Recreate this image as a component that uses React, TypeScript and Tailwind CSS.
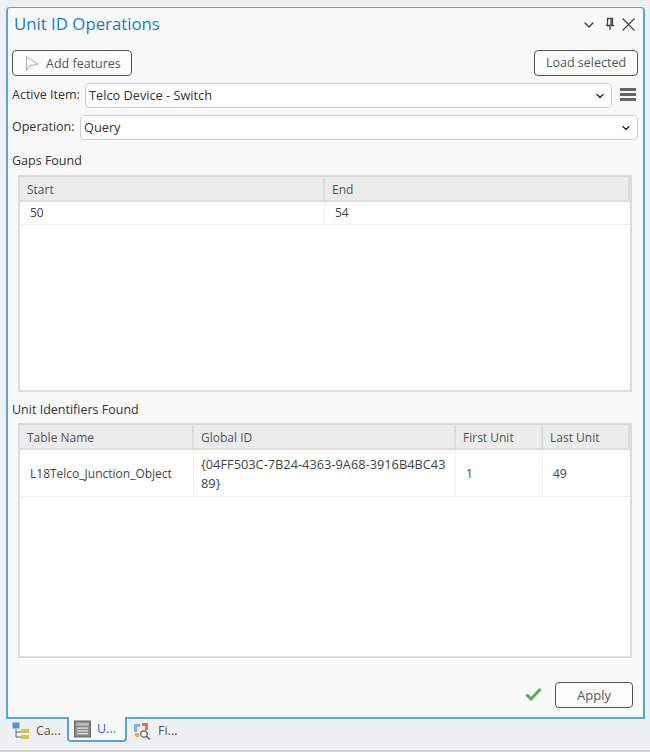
import { ChevronDown, X } from 'lucide-react'

const FONT = "font-['Open_Sans','Noto_Sans',sans-serif]"

function Select({ value }: { value: string }) {
  return (
    <div className="flex-1 h-[25px] flex items-center justify-between pl-[3px] pr-[5px] bg-white border border-[#d0d0d0] rounded-[4px] text-[12.75px] text-[#333]">
      <span className="pt-[1px]">{value}</span>
      <ChevronDown size={12} strokeWidth={2.5} className="text-[#222]" />
    </div>
  )
}

function Button({ className, children }: { className: string; children: React.ReactNode }) {
  return (
    <div className={`h-[26px] flex items-center bg-white/60 border-[1.5px] border-[#555] rounded-[4px] text-[12.5px] text-[#555] ${className}`}>
      {children}
    </div>
  )
}

function TableHead({ cols }: { cols: { label: string; w: string }[] }) {
  return (
    <div className="h-[25px] flex bg-[#ececec] border-b-2 border-[#dcdcdc] text-[12px] text-[#555]">
      {cols.map(c => (
        <div key={c.label} className={`${c.w} pl-[7px] pt-[3px] flex items-center border-r-2 border-[#dcdcdc]`}>{c.label}</div>
      ))}
    </div>
  )
}

export default function App() {
  return (
    <div className={`w-[650px] h-[752px] flex flex-col bg-[#eff0f2] ${FONT} overflow-hidden`}>
      <div className="h-[7px]" />
      <div className="mx-[6px] w-[639px] h-[712px] shrink-0 flex flex-col bg-[#f9f9f9] border border-[#5aa5d8] border-b-2 border-l-2 border-r-2 rounded-t-[4px] px-[4px]">
        {/* Title */}
        <div className="h-[33px] flex items-center justify-between pl-[2px] pb-[1px]">
          <span className="text-[16.8px] text-[#1a7cc4]">Unit ID Operations</span>
          <div className="flex items-center text-[#444]">
            <ChevronDown size={16} strokeWidth={2.2} className="mt-[2px]" />
            <svg width="12" height="14" viewBox="0 0 12 14" className="ml-[7px]">
              <path d="M3.5 1.5h5v7h-5zM2 8.5h8M6 8.5V13M7 2v6" stroke="#444" strokeWidth="1.3" fill="none" />
            </svg>
            <X size={23} strokeWidth={1.2} className="-mr-[1px] ml-[1px]" />
          </div>
        </div>

        {/* Action buttons */}
        <div className="mt-[9px] flex justify-between pr-[1px]">
          <Button className="w-[120px] pl-[12px] gap-[7px]">
            <svg width="14" height="17" viewBox="0 0 14 17">
              <path d="M1.5 1.5L13 9.5L5 10.5L1.5 15.5Z" fill="#fff" stroke="#aaa" strokeWidth="1" />
            </svg>
            <span className="pt-[2px]">Add features</span>
          </Button>
          <Button className="w-[104px] justify-center">Load selected</Button>
        </div>

        {/* Form */}
        <div className="mt-[7px] flex items-center gap-[4px]">
          <span className="text-[12.5px] text-[#333] w-[69px] whitespace-nowrap">Active Item:</span>
          <Select value="Telco Device - Switch" />
          <div className="w-[16px] ml-[4px] mr-[3px] -mt-[2px] flex flex-col gap-[2px]">
            <div className="h-[3px] bg-[#666]" />
            <div className="h-[3px] bg-[#666]" />
            <div className="h-[3px] bg-[#666]" />
          </div>
        </div>
        <div className="mt-[7px] flex items-center gap-[5px] pr-[1px]">
          <span className="text-[12.5px] text-[#333] w-[63px] whitespace-nowrap">Operation:</span>
          <Select value="Query" />
        </div>

        {/* Gaps */}
        <div className="mt-[12px] text-[12.5px] text-[#333] leading-[18px]">Gaps Found</div>
        <div className="mt-[5px] ml-[6px] mr-[7px] h-[217px] bg-white border-2 border-[#dcdcdc]">
          <TableHead cols={[{ label: 'Start', w: 'w-[305px]' }, { label: 'End', w: 'flex-1' }]} />
          <div className="h-[23px] flex text-[12px] text-[#444] border-b border-[#eee]">
            <div className="w-[305px] pl-[10px] flex items-center border-r border-[#eee]">50</div>
            <div className="flex-1 pl-[10px] flex items-center">54</div>
          </div>
        </div>

        {/* Unit identifiers */}
        <div className="mt-[9px] text-[12.5px] text-[#333] leading-[18px]">Unit Identifiers Found</div>
        <div className="mt-[4px] ml-[6px] mr-[7px] h-[235px] bg-white border-2 border-[#dcdcdc]">
          <TableHead cols={[
            { label: 'Table Name', w: 'w-[174px]' },
            { label: 'Global ID', w: 'w-[262px]' },
            { label: 'First Unit', w: 'w-[87px]' },
            { label: 'Last Unit', w: 'flex-1' },
          ]} />
          <div className="h-[47px] flex text-[12px] text-[#444] border-b border-[#eee]">
            <div className="w-[174px] pl-[10px] pt-[2px] flex items-center border-r border-[#eee]">L18Telco_Junction_Object</div>
            <div className="w-[262px] pl-[7px] pt-[5px] leading-[19px] text-[12.8px] border-r border-[#eee] whitespace-nowrap">
              {'{04FF503C-7B24-4363-9A68-3916B4BC43'}<br />{'89}'}
            </div>
            <div className="w-[87px] pl-[10px] pt-[2px] flex items-center border-r border-[#eee]">1</div>
            <div className="flex-1 pl-[10px] pt-[2px] flex items-center">49</div>
          </div>
        </div>

        {/* Footer */}
        <div className="mt-[24px] flex items-center justify-end gap-[13px] pr-[6px]">
          <svg width="17" height="14" viewBox="0 0 17 14" className="-mt-[2px]">
            <path d="M1.5 7.5L6 12L15.5 2" stroke="#5aa85c" strokeWidth="3" fill="none" />
          </svg>
          <Button className="w-[78px] justify-center !text-[13px]"><span className="pt-[1px]">Apply</span></Button>
        </div>
      </div>

      {/* Dock tabs */}
      <div className="h-[24px] flex text-[12.5px] text-[#555]">
        <div className="w-[55px] ml-[12px] flex items-center gap-[6px]">
          <svg width="18" height="18" viewBox="0 0 18 18" className="shrink-0">
            <rect x="0.5" y="0.5" width="7" height="6" fill="#4a9bd4" />
            <path d="M4 7v8h5M4 10h5" stroke="#666" strokeWidth="1" fill="none" />
            <rect x="9" y="7" width="8" height="4" fill="#dcc04c" />
            <rect x="9" y="13" width="8" height="4" fill="#dcc04c" />
          </svg>
          <span>Ca...</span>
        </div>
        <div className="w-[60px] h-[25px] -mt-[2px] border-2 border-t-0 border-[#5aa5d8] rounded-b-[4px] bg-[#f9f9f9] flex items-center gap-[6px] pl-[5px] pt-[1px]">
          <svg width="17" height="18" viewBox="0 0 18 18" className="shrink-0">
            <rect x="0.5" y="0.5" width="17" height="17" fill="#888" stroke="#666" />
            <rect x="2.5" y="2.5" width="13" height="3" fill="#bbb" />
            <path d="M3 8h12M3 11h12M3 14h12" stroke="#e8e8e8" strokeWidth="1.3" />
          </svg>
          <span className="text-[#2a6ea8]">U...</span>
        </div>
        <div className="ml-[6px] flex items-center gap-[7px]">
          <svg width="18" height="18" viewBox="0 0 18 18" className="shrink-0">
            <path d="M1 2h6v3H4v5H1z" fill="#7ab3dc" />
            <path d="M9 1h6v7h-3V4H9z" fill="#d9764f" />
            <path d="M1 11h5v4H3z" fill="#e0a860" />
            <circle cx="11" cy="12" r="3.2" fill="#fff" stroke="#555" strokeWidth="1.2" />
            <path d="M13.5 14.5L17 17.5" stroke="#555" strokeWidth="1.5" />
          </svg>
          <span>Fi...</span>
        </div>
      </div>
      <div className="flex-1" />
      <div className="h-[2px] bg-[#d4d4d4]" />
    </div>
  )
}
